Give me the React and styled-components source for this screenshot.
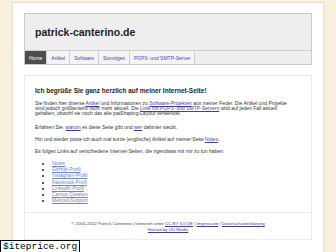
import React from 'react';
import styled, { createGlobalStyle } from 'styled-components';

const GlobalStyle = createGlobalStyle`
  html, body {
    margin: 0;
    padding: 0;
    background: #f8efdc;
    font-family: "Liberation Sans", Arial, sans-serif;
  }
`;

const Page = styled.div`
  position: relative;
  width: 288px;
  min-height: 239px;
  margin: 3px 0 0 13px;
  padding: 10px 11px 0;
  background: #fff;
  box-shadow: 0 0 2px rgba(120, 100, 60, 0.35);
`;

const Header = styled.header`
  background: #eeeeee;
  border: 1px solid #c9c9c9;
`;

const Title = styled.h1`
  margin: 0;
  height: 36px;
  padding-left: 10px;
  display: flex;
  align-items: center;
  font-size: 10.5px;
  font-weight: bold;
  color: #1e1e1e;
`;

const Nav = styled.nav`
  display: flex;
  height: 13px;
  border-top: 1px solid #cfcfcf;
`;

const Tab = styled.a`
  display: flex;
  align-items: center;
  padding: 0 4px;
  font-size: 5px;
  text-decoration: none;
  border-right: 1px solid #cfcfcf;
  background: ${({ $active }) => ($active ? '#4d4d4d' : '#f4f4f4')};
  color: ${({ $active }) => ($active ? '#ffffff' : '#4c46b8')};
`;

const Content = styled.main`
  margin-top: 10px;
  border: 1px solid #ececec;
  padding: 11px 10px 9px;
  color: #333;
`;

const Heading = styled.h2`
  margin: 0 0 6px;
  font-size: 6.5px;
  line-height: 8px;
  font-weight: bold;
  color: #1e1e1e;
`;

const Para = styled.p`
  margin: 0 0 ${({ $gap }) => $gap || 7}px;
  font-size: 5px;
  line-height: 5px;
  white-space: nowrap;
`;

const Link = styled.a`
  color: #3c3cae;
  text-decoration: underline;
`;

const List = styled.ul`
  margin: 0;
  padding-left: 17px;
  font-size: 5px;
  line-height: 6.2px;
`;

const Item = styled.li`
  color: #222;
  a {
    color: #6a86cc;
  }
`;

const Footer = styled.footer`
  border: 1px solid #ececec;
  border-top: none;
  padding: 8px 0 6px;
  text-align: center;
  font-size: 4.4px;
  line-height: 6px;
  color: #444;
`;

const Watermark = styled.div`
  position: fixed;
  left: 0;
  top: 240px;
  padding: 0 2px;
  background: #fff;
  border: 1px solid #000;
  font-family: "Liberation Mono", "Courier New", monospace;
  font-size: 9.5px;
  line-height: 11px;
  color: #000;
`;

const links = [
  'Notes',
  'GitHub-Profil',
  'Instagram-Profil',
  'Facebook-Profil',
  'LinkedIn-Profil',
  'Cantus Creatius',
  'Metroid-Support',
];

const tabs = ['Home', 'Artikel', 'Software', 'Sonstiges', 'POP3- und SMTP-Server'];

export default function App() {
  return (
    <>
      <GlobalStyle />
      <Page>
        <Header>
          <Title>patrick-canterino.de</Title>
          <Nav>
            {tabs.map((t, i) => (
              <Tab key={t} href="#" $active={i === 0}>{t}</Tab>
            ))}
          </Nav>
        </Header>
        <Content>
          <Heading>Ich begrüße Sie ganz herzlich auf meiner Internet-Seite!</Heading>
          <Para $gap={9}>
            Sie finden hier diverse <Link href="#">Artikel</Link> und Informationen zu{' '}
            <Link href="#">Software-Projekten</Link> aus meiner Feder. Die Artikel und Projekte
            <br />
            sind jedoch größtenteils nicht mehr aktuell. Die{' '}
            <Link href="#">Liste mit POP3- und SMTP-Servern</Link> wird auf jeden Fall aktuell
            <br />
            gehalten, obwohl sie noch das alte patShaping-Layout verwendet.
          </Para>
          <Para>
            Erfahren Sie, <Link href="#">warum</Link> es diese Seite gibt und{' '}
            <Link href="#">wer</Link> dahinter steckt.
          </Para>
          <Para>
            Hin und wieder poste ich auch mal kurze (englische) Artikel auf meiner Seite{' '}
            <Link href="#">Notes</Link>.
          </Para>
          <Para $gap={6}>
            Es folgen Links auf verschiedene Internet-Seiten, die irgendwas mit mir zu tun haben:
          </Para>
          <List>
            {links.map((l) => (
              <Item key={l}><a href="#">{l}</a></Item>
            ))}
          </List>
        </Content>
        <Footer>
          © 2001-2022 Patrick Canterino | lizenziert unter <Link href="#">CC BY 3.0 DE</Link> |{' '}
          <Link href="#">Impressum</Link> | <Link href="#">Datenschutzerklärung</Link>
          <br />
          <Link href="#">Hosted by UD Media</Link>
        </Footer>
      </Page>
      <Watermark>$iteprice.org</Watermark>
    </>
  );
}
